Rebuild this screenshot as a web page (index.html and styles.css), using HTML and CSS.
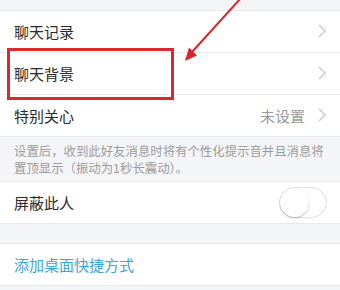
FILE: index.html
```html
<!DOCTYPE html>
<html lang="zh">
<head>
<meta charset="utf-8">
<link rel="stylesheet" href="styles.css">
</head>
<body>
<div class="page">
  <div class="band top"></div>
  <div class="group">
    <div class="row"><span class="label">聊天记录</span><svg class="chev" viewBox="0 0 8 14" width="8" height="14"><polyline points="1,1 7,7 1,13"/></svg></div>
    <div class="row"><span class="label">聊天背景</span><svg class="chev" viewBox="0 0 8 14" width="8" height="14"><polyline points="1,1 7,7 1,13"/></svg></div>
    <div class="row"><span class="label">特别关心</span><span class="value">未设置</span><svg class="chev" viewBox="0 0 8 14" width="8" height="14"><polyline points="1,1 7,7 1,13"/></svg></div>
  </div>
  <div class="note">设置后，收到此好友消息时将有个性化提示音并且消息将置顶显示（振动为1秒长震动）。</div>
  <div class="group">
    <div class="row"><span class="label">屏蔽此人</span><span class="toggle"><span class="knob"></span></span></div>
  </div>
  <div class="band gap"></div>
  <div class="group">
    <div class="row"><span class="label link">添加桌面快捷方式</span></div>
  </div>
  <div class="band bottom"></div>

  <div class="highlight"></div>
  <svg class="arrow" width="340" height="290" viewBox="0 0 340 290">
    <line x1="241" y1="-2" x2="192" y2="52"/>
    <polygon points="185,61 197,55.5 189,47.5"/>
  </svg>
</div>
</body>
</html>
```

FILE: styles.css
```css
html, body {
  margin: 0;
  padding: 0;
  background: #f4f5f7;
}
body {
  font-family: "Noto Sans CJK SC", "Noto Sans", sans-serif;
  color: #333;
}
.page {
  position: relative;
  width: 340px;
  height: 290px;
  overflow: hidden;
}
.band {
  background: #f4f5f7;
}
.band.top {
  height: 10px;
}
.band.gap {
  height: 19px;
}
.band.bottom {
  height: 10px;
}
.group {
  background: #fff;
  border-top: 1px solid #e8e9eb;
  border-bottom: 1px solid #e8e9eb;
}
.row {
  height: 41px;
  display: flex;
  align-items: center;
  padding: 0 14px 1px 14px;
  box-sizing: border-box;
}
.row + .row {
  border-top: 1px solid #ececee;
  height: 42px;
}
.label {
  font-size: 15px;
  flex: 1;
  color: #2a2a2a;
}
.label.link {
  color: #3aa6d6;
}
.value {
  font-size: 15px;
  color: #9a9a9a;
  margin-right: 13px;
}
.chev {
  display: block;
}
.chev polyline {
  fill: none;
  stroke: #c6c6c8;
  stroke-width: 1.3;
}
.note {
  padding: 6px 14px 4px 14px;
  font-size: 12.4px;
  line-height: 17px;
  color: #9c9c9c;
  height: 44px;
  box-sizing: border-box;
}
.toggle {
  position: relative;
  width: 48px;
  height: 31px;
  border-radius: 16px;
  border: 1px solid #e0e0e0;
  box-sizing: border-box;
  background: #fff;
  margin-right: -1px;
}
.knob {
  position: absolute;
  left: 0;
  top: 0;
  width: 29px;
  height: 29px;
  border-radius: 50%;
  background: #fff;
  box-shadow: 0 1px 2px rgba(0,0,0,0.25);
}
.highlight {
  position: absolute;
  left: 7px;
  top: 48px;
  width: 167px;
  height: 52px;
  border: 3px solid #d62a2f;
  box-sizing: border-box;
}
.arrow {
  position: absolute;
  left: 0;
  top: 0;
}
.arrow line {
  stroke: #d8262c;
  stroke-width: 2;
}
.arrow polygon {
  fill: #d8262c;
}
```
